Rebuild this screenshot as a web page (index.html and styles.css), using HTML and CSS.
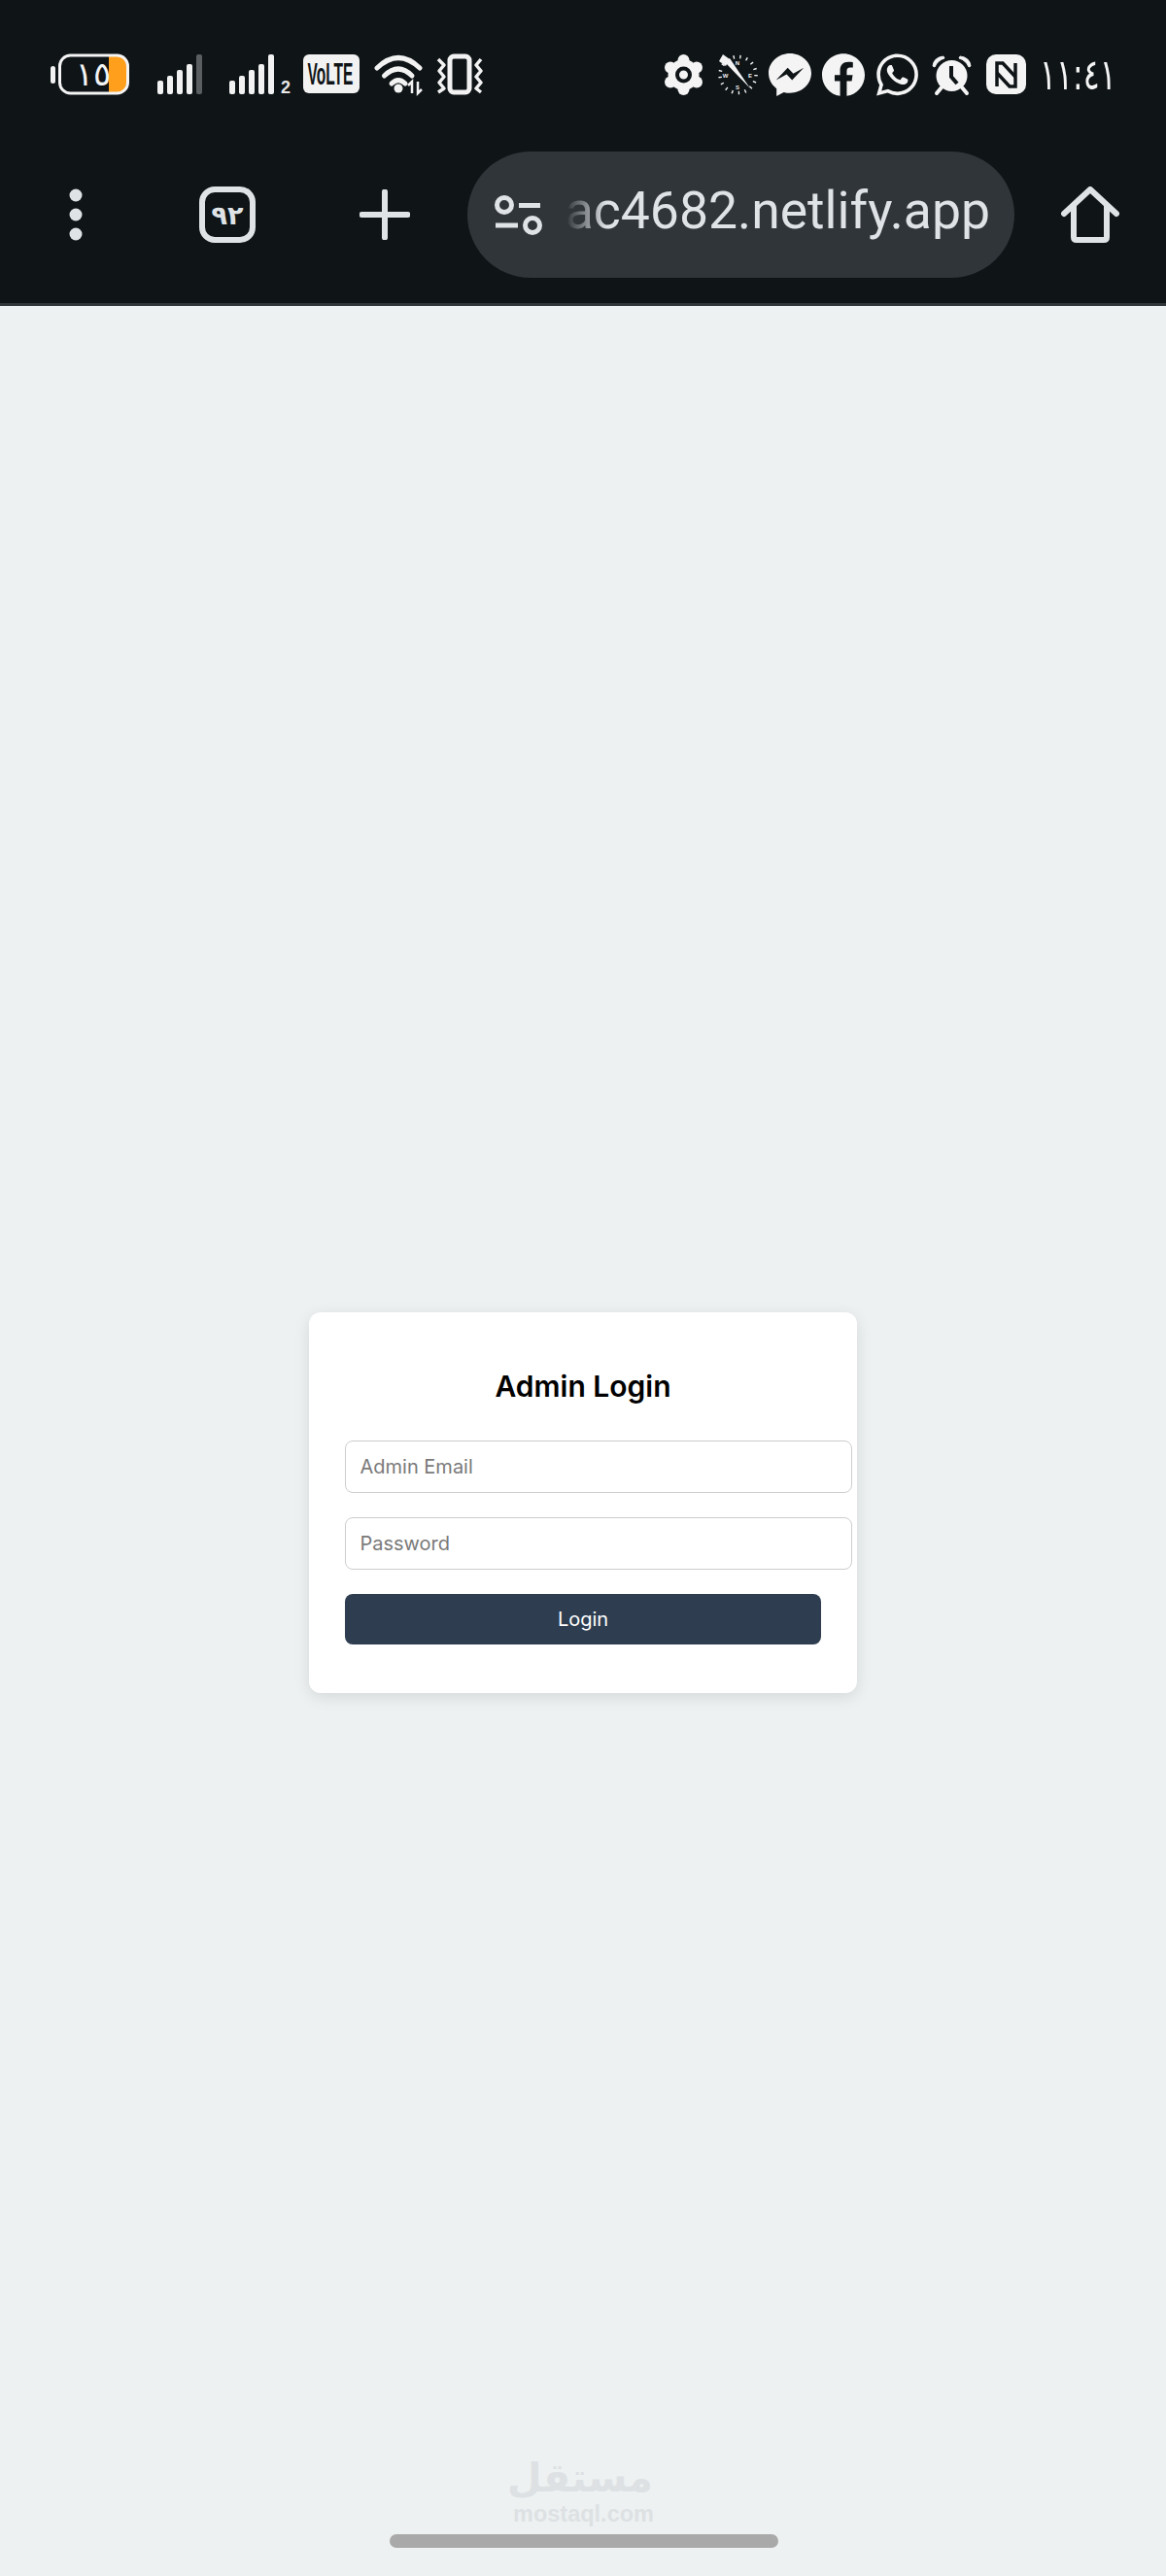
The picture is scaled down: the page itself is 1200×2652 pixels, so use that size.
FILE: index.html
```html
<!DOCTYPE html>
<html lang="en">
<head>
<meta charset="utf-8">
<title>Admin Login</title>
<link rel="stylesheet" href="styles.css">
</head>
<body>
<header class="browser">
  <div class="status">
    <div class="status-group">
      <svg class="icon" width="81" height="44" viewBox="0 0 81 44">
        <rect x="0" y="13" width="5" height="18" rx="2.500" fill="#f2f2f2"/>
        <path d="M60 3H70Q78 3 78 12V31Q78 40 70 40H60Z" fill="#ff9f1c"/>
        <rect x="9.500" y="2" width="70" height="39" rx="11" fill="none" stroke="#f4f4f4" stroke-width="3"/>
        <text class="battery-num" x="44" y="33" text-anchor="middle">١٥</text>
      </svg>
      <svg class="icon ml29" width="46" height="44" viewBox="0 0 46 44">
        <g fill="#f2f2f2"><rect x="0" y="28" width="6" height="14" rx="2"/><rect x="10" y="23" width="6" height="19" rx="2"/><rect x="20" y="17" width="6" height="25" rx="2"/><rect x="30" y="11" width="6" height="31" rx="2"/></g>
        <rect x="40" y="1" width="6" height="41" rx="2" fill="#5a5e61"/>
      </svg>
      <svg class="icon ml28" width="64" height="44" viewBox="0 0 64 44">
        <g fill="#f2f2f2"><rect x="0" y="28" width="6" height="14" rx="2"/><rect x="10" y="23" width="6" height="19" rx="2"/><rect x="20" y="17" width="6" height="25" rx="2"/><rect x="30" y="11" width="6" height="31" rx="2"/><rect x="40" y="1" width="6" height="41" rx="2"/></g>
        <text class="sim-num" x="53" y="41">2</text>
      </svg>
      <svg class="icon ml12" width="58" height="44" viewBox="0 0 58 44">
        <rect x="0" y="1" width="58" height="40" rx="6" fill="#f2f2f2"/>
        <text class="volte" transform="translate(4.500 32) scale(.5 1)" x="0" y="0">VoLTE</text>
      </svg>
      <svg class="icon ml15" width="51" height="44" viewBox="0 0 51 44">
        <g fill="none" stroke="#f2f2f2" stroke-width="5" stroke-linecap="round">
          <path d="M3 15Q25 -6 47 15"/><path d="M10.500 23Q25 9 39 23"/><path d="M18 31Q25 24 32 31"/>
        </g>
        <circle cx="25" cy="36" r="4.500" fill="#f2f2f2"/>
        <g fill="none" stroke="#f2f2f2" stroke-width="2.500"><path d="M39 41V29L35 33"/><path d="M45 29V41L49 37"/></g>
      </svg>
      <svg class="icon ml13" width="48" height="44" viewBox="0 0 48 44">
        <rect x="14" y="3" width="20" height="37" rx="4" fill="none" stroke="#f2f2f2" stroke-width="5"/>
        <g fill="none" stroke="#f2f2f2" stroke-width="3.500" stroke-linejoin="round">
          <path d="M2 6L8 12L3 18L8 24L3 30L8 36L2 40"/><path d="M46 6L41 12L46 18L41 24L46 30L41 36L46 40"/>
        </g>
      </svg>
    </div>
    <div class="status-group">
      <svg class="icon" width="41" height="44" viewBox="0 0 41 44">
        <g fill="#f4f4f4"><circle cx="20.500" cy="22" r="16"/><circle cx="20.500" cy="7" r="6"/><circle cx="20.500" cy="37" r="6"/><circle cx="7" cy="14.500" r="6"/><circle cx="34" cy="14.500" r="6"/><circle cx="7" cy="29.500" r="6"/><circle cx="34" cy="29.500" r="6"/></g>
        <circle cx="20.500" cy="22" r="6.500" fill="#f4f4f4" stroke="#0f1417" stroke-width="4"/>
      </svg>
      <svg class="icon ml14" width="42" height="44" viewBox="0 0 42 44">
        <circle cx="21.500" cy="22" r="18.500" fill="none" stroke="#f2f2f2" stroke-width="3.500" stroke-dasharray="1.400 5.400"/>
        <text class="compass" x="21" y="12" text-anchor="middle">N</text>
        <text class="compass" x="21" y="37" text-anchor="middle">S</text>
        <text class="compass" x="8.500" y="24.500" text-anchor="middle">W</text>
        <text class="compass" x="34" y="24.500" text-anchor="middle">E</text>
        <path d="M6 1L13 6L9 13L2 8Z" fill="#f4f4f4"/>
        <path d="M8 9L34 36L13 5Z" fill="#f4f4f4"/>
      </svg>
      <svg class="icon ml11" width="44" height="44" viewBox="0 0 24 24"><path fill="#f4f4f4" d="M12 0C5.373 0 0 4.974 0 11.111c0 3.498 1.744 6.614 4.469 8.654V24l4.088-2.242c1.092.3 2.246.464 3.443.464 6.627 0 12-4.975 12-11.111S18.627 0 12 0zm1.191 14.963l-3.055-3.26-5.963 3.26L10.732 8l3.131 3.259L19.752 8l-6.561 6.963z"/></svg>
      <svg class="icon ml11" width="44" height="44" viewBox="0 0 24 24"><path fill="#f4f4f4" d="M24 12.073c0-6.627-5.373-12-12-12s-12 5.373-12 12c0 5.99 4.388 10.954 10.125 11.854v-8.385H7.078v-3.47h3.047V9.43c0-3.007 1.792-4.669 4.533-4.669 1.312 0 2.686.235 2.686.235v2.953H15.83c-1.491 0-1.956.925-1.956 1.874v2.25h3.328l-.532 3.47h-2.796v8.385C19.612 23.027 24 18.062 24 12.073z"/></svg>
      <svg class="icon ml12" width="43" height="44" viewBox="0 0 24 24"><path fill="#f4f4f4" d="M17.472 14.382c-.297-.149-1.758-.867-2.03-.967-.273-.099-.471-.148-.67.15-.197.297-.767.966-.94 1.164-.173.199-.347.223-.644.075-.297-.15-1.255-.463-2.39-1.475-.883-.788-1.48-1.761-1.653-2.059-.173-.297-.018-.458.13-.606.134-.133.298-.347.446-.52.149-.174.198-.298.298-.497.099-.198.05-.371-.025-.52-.075-.149-.669-1.612-.916-2.207-.242-.579-.487-.5-.669-.51-.173-.008-.371-.01-.57-.01-.198 0-.52.074-.792.372-.272.297-1.04 1.016-1.04 2.479 0 1.462 1.065 2.875 1.213 3.074.149.198 2.096 3.2 5.077 4.487.709.306 1.262.489 1.694.625.712.227 1.36.195 1.871.118.571-.085 1.758-.719 2.006-1.413.248-.694.248-1.289.173-1.413-.074-.124-.272-.198-.57-.347m-5.421 7.403h-.004a9.87 9.87 0 01-5.031-1.378l-.361-.214-3.741.982.998-3.648-.235-.374a9.86 9.86 0 01-1.51-5.26c.001-5.45 4.436-9.884 9.888-9.884 2.64 0 5.122 1.03 6.988 2.898a9.825 9.825 0 012.893 6.994c-.003 5.45-4.437 9.884-9.885 9.884m8.413-18.297A11.815 11.815 0 0012.05 0C5.495 0 .16 5.335.157 11.892c0 2.096.547 4.142 1.588 5.945L.057 24l6.305-1.654a11.882 11.882 0 005.683 1.448h.005c6.554 0 11.89-5.335 11.893-11.893a11.821 11.821 0 00-3.48-8.413Z"/></svg>
      <svg class="icon ml14" width="41" height="44" viewBox="0 0 41 44">
        <circle cx="20.500" cy="23" r="16" fill="#f4f4f4"/>
        <path d="M1 13Q2 4 12 3L13 5Q6 7 3 14Z" fill="#f4f4f4" stroke="#f4f4f4"/>
        <path d="M40 13Q39 4 29 3L28 5Q35 7 38 14Z" fill="#f4f4f4" stroke="#f4f4f4"/>
        <path d="M5 41L10 35M36 41L31 35" stroke="#f4f4f4" stroke-width="4" stroke-linecap="round"/>
        <path d="M20 13V24L26 31" fill="none" stroke="#0f1417" stroke-width="4"/>
      </svg>
      <svg class="icon ml15" width="41" height="44" viewBox="0 0 41 44">
        <rect x="0" y="1" width="41" height="41" rx="10" fill="#f4f4f4"/>
        <g fill="none" stroke="#0f1417" stroke-width="3.500">
          <path d="M11 34V10H17L30 24"/><path d="M30 10V34H24L11 20"/>
        </g>
      </svg>
      <span class="clock"><span class="clock-text">١١:٤١</span></span>
    </div>
  </div>
  <div class="toolbar">
    <svg class="tool-dots" width="14" height="54" viewBox="0 0 14 54">
      <g fill="#dfe3e6"><circle cx="7" cy="7" r="6.500"/><circle cx="7" cy="27" r="6.500"/><circle cx="7" cy="47" r="6.500"/></g>
    </svg>
    <div class="tab-count"><span>٩٢</span></div>
    <svg class="tool-plus" width="52" height="52" viewBox="0 0 52 52">
      <path d="M26 2.500V49.500M2.500 26H49.500" stroke="#dfe3e6" stroke-width="6" stroke-linecap="round"/>
    </svg>
    <div class="address">
      <svg class="tune" width="49" height="41" viewBox="0 0 49 41">
        <g fill="none" stroke="#dfe3e6" stroke-width="5"><circle cx="10" cy="10" r="7.500"/><circle cx="39" cy="31" r="7.500"/><path d="M25 10.500H47"/><path d="M1 31H24"/></g>
      </svg>
      <div class="url"><span>ac4682.netlify.app</span></div>
    </div>
    <svg class="tool-home" width="60" height="58" viewBox="0 0 60 58">
      <path d="M3 28L30 3L57 28M13 20V52Q13 55 16 55H44Q47 55 47 52V20" fill="none" stroke="#dfe3e6" stroke-width="6" stroke-linecap="round" stroke-linejoin="round"/>
    </svg>
  </div>
</header>
<main class="stage">
  <form class="card">
    <h2 class="card-title">Admin Login</h2>
    <input class="field" type="email" placeholder="Admin Email">
    <input class="field" type="password" placeholder="Password">
    <button class="submit" type="button">Login</button>
  </form>
</main>
<div class="watermark">
  <div class="watermark-ar" lang="ar" dir="rtl">مستقل</div>
  <div class="watermark-en">mostaql.com</div>
</div>
<div class="home-bar"></div>
</body>
</html>
```
FILE: styles.css
```css
* { box-sizing: border-box; }
html, body { margin: 0; height: 100%; }
body {
  position: relative;
  display: flex;
  flex-direction: column;
  min-height: 2652px;
  background: #edf1f2;
  font-family: Inter, "Noto Sans", sans-serif;
  overflow: hidden;
}
.browser {
  height: 315px;
  padding-top: 55px;
  background: #0f1417;
  border-bottom: 3px solid #30353a;
}
.status {
  display: flex;
  justify-content: space-between;
  height: 44px;
  padding: 0 56px 0 52px;
}
.status-group { display: flex; align-items: flex-start; }
.icon { display: block; flex: none; }
.ml11 { margin-left: 11px; }
.ml12 { margin-left: 12px; }
.ml13 { margin-left: 13px; }
.ml14 { margin-left: 14px; }
.ml15 { margin-left: 15px; }
.ml28 { margin-left: 28px; }
.ml29 { margin-left: 29px; }
.battery-num {
  font: 34px "DejaVu Sans", sans-serif;
  fill: #f4f4f4;
}
.sim-num { font: 700 18px "Liberation Sans", sans-serif; fill: #e8e8e8; }
.volte { font: 700 31px "Liberation Sans", sans-serif; fill: #0f1417; }
.compass { font: 700 6px "Liberation Sans", sans-serif; fill: #f2f2f2; }
.clock {
  flex: none;
  margin-left: 14px;
  width: 74px;
  font: 44px/44px "DejaVu Sans", sans-serif;
  color: #f4f4f4;
  white-space: nowrap;
  direction: ltr;
}
.clock-text {
  display: inline-block;
  transform: scaleX(.72);
  transform-origin: left center;
}
.toolbar {
  display: flex;
  align-items: center;
  height: 130px;
  margin-top: 57px;
  padding-left: 71px;
}
.tool-dots { flex: none; margin-top: -1px; }
.tab-count {
  display: flex;
  align-items: center;
  justify-content: center;
  flex: none;
  width: 58px;
  height: 58px;
  margin-left: 120px;
  border: 6px solid #dfe3e6;
  border-radius: 16px;
  color: #dfe3e6;
  font: 700 27px "DejaVu Sans", sans-serif;
}
.tool-plus { flex: none; margin-left: 107px; }
.address {
  display: flex;
  align-items: center;
  flex: none;
  width: 563px;
  height: 130px;
  margin-left: 59px;
  padding: 0 25px 0 28px;
  background: #30353a;
  border-radius: 65px;
}
.tune { flex: none; }
.url {
  flex: 1;
  display: flex;
  justify-content: flex-end;
  min-width: 0;
  margin-left: 14px;
  margin-top: -9px;
  color: #dfe3e6;
  font: 400 53.500px/70px Roboto, sans-serif;
  white-space: nowrap;
  -webkit-mask-image: linear-gradient(to right, transparent 10px, #000 52px);
  mask-image: linear-gradient(to right, transparent 10px, #000 52px);
}
.tool-home { flex: none; margin-left: 48px; }
.stage {
  flex: 1;
  display: flex;
  align-items: flex-start;
  justify-content: center;
  padding-top: 1036px;
}
.card {
  width: 564px;
  height: 392px;
  padding: 0 37px;
  background: #fff;
  border-radius: 12px;
  box-shadow: 0 4px 16px rgba(0, 0, 0, .1);
}
.card-title {
  margin: 0 0 37px;
  padding-top: 58px;
  font: 600 30px/37px Inter, sans-serif;
  color: #000;
  text-align: center;
}
.field {
  display: block;
  width: 522px;
  height: 54px;
  margin: 0 0 25px;
  padding: 0 14.500px;
  background: #fff;
  border: 1.500px solid #cdcdcd;
  border-radius: 8px;
  font: 400 20px Inter, sans-serif;
  color: #333;
}
.field::placeholder { color: #7a7a7a; opacity: 1; }
.submit {
  display: block;
  width: 490px;
  height: 52px;
  padding: 0;
  background: #2e3e50;
  border: 0;
  border-radius: 8px;
  color: #fff;
  font: 400 20px Inter, sans-serif;
}
.watermark {
  position: absolute;
  left: 528px;
  top: 2527px;
  width: 144px;
  color: #dde1e3;
  text-align: center;
}
.watermark-ar { font: 700 41px/49px "DejaVu Sans", sans-serif; white-space: nowrap; }
.watermark-en { font: 700 23.500px/24px "Liberation Sans", sans-serif; white-space: nowrap; }
.home-bar {
  position: absolute;
  left: 401px;
  top: 2609px;
  width: 400px;
  height: 14px;
  background: #a9a9a9;
  border-radius: 7px;
}
```
